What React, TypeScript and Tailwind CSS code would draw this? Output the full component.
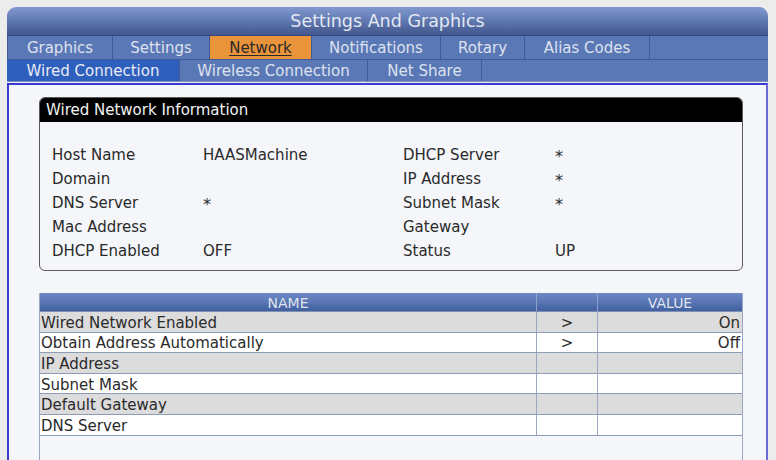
import React from "react";

const font = { fontFamily: '"DejaVu Sans", Verdana, sans-serif' };

const tabs1 = [
  { label: "Graphics", w: 105 },
  { label: "Settings", w: 97 },
  { label: "Network", w: 102, active: true },
  { label: "Notifications", w: 129 },
  { label: "Rotary", w: 84 },
  { label: "Alias Codes", w: 125 },
];

const tabs2 = [
  { label: "Wired Connection", w: 173, active: true },
  { label: "Wireless Connection", w: 188 },
  { label: "Net Share", w: 114 },
];

const info: [string, string, string, string][] = [
  ["Host Name", "HAASMachine", "DHCP Server", "*"],
  ["Domain", "", "IP Address", "*"],
  ["DNS Server", "*", "Subnet Mask", "*"],
  ["Mac Address", "", "Gateway", ""],
  ["DHCP Enabled", "OFF", "Status", "UP"],
];

const rows: [string, string, string][] = [
  ["Wired Network Enabled", ">", "On"],
  ["Obtain Address Automatically", ">", "Off"],
  ["IP Address", "", ""],
  ["Subnet Mask", "", ""],
  ["Default Gateway", "", ""],
  ["DNS Server", "", ""],
];

function Val({ v }: { v: string }) {
  if (v === "*") return <span className="inline-block translate-y-[2px] text-[16px]">*</span>;
  return <>{v}</>;
}

export default function App() {
  return (
    <div
      className="w-[776px] h-[460px] overflow-hidden bg-[#ececec] pt-[7px] pl-[7px] pr-[8px] flex flex-col"
      style={font}
    >
      {/* Title bar */}
      <div className="h-[29px] shrink-0 rounded-t-[9px] bg-gradient-to-b from-[#8199cf] via-[#5f78b0] to-[#42578d] border-b border-[#34477a] flex items-center justify-center text-[17.5px] text-[#e4e8f2] pt-[1px]">
        Settings And Graphics
      </div>
      {/* Tab row 1 */}
      <div className="h-[24px] shrink-0 bg-[#5b78b6] flex border-b border-[#3f5a94] border-l border-l-[#3f5a94]">
        {tabs1.map((t) => (
          <div
            key={t.label}
            style={{ width: t.w }}
            className={
              "h-full flex items-center justify-center text-[15px] pt-[2px] border-r border-[#3f5a94] " +
              (t.active ? "bg-[#e9943b] text-[#2a2a2a] underline underline-offset-2" : "text-[#dde2ee]")
            }
          >
            {t.label}
          </div>
        ))}
      </div>
      {/* Tab row 2 */}
      <div className="h-[22px] shrink-0 bg-[#5b78b6] flex border-b border-[#8090c0]">
        {tabs2.map((t) => (
          <div
            key={t.label}
            style={{ width: t.w }}
            className={
              "h-full flex items-center justify-center text-[15px] pt-[1px] border-r border-[#3f5a94] " +
              (t.active ? "bg-[#2f5fbd] text-[#e8ecf5]" : "text-[#dde2ee]")
            }
          >
            {t.label}
          </div>
        ))}
      </div>
      {/* Content */}
      <div className="mt-[1px] flex-1 border-2 border-b-0 border-[#3a3ad4] border-r-[#6a6ad8] bg-[#f4f6f9] flex flex-col pl-[30px] pt-[12px]">
        {/* Info box */}
        <div className="w-[704px] shrink-0 rounded-[6px] border border-[#5a5a5a] overflow-hidden bg-[#f4f6f9]">
          <div className="h-[24px] bg-black text-[#f2f2f2] text-[15px] flex items-center pl-[6px] pt-[1px]">
            Wired Network Information
          </div>
          <div className="pt-[21px] pb-[7px] pl-[12px] grid grid-cols-[151px_200px_152px_1fr] text-[15px] text-[#2a2a2a]">
            {info.map((r, i) => (
              <React.Fragment key={i}>
                <div className="h-[24px] flex items-center">{r[0]}</div>
                <div className="h-[24px] flex items-center"><Val v={r[1]} /></div>
                <div className="h-[24px] flex items-center">{r[2]}</div>
                <div className="h-[24px] flex items-center"><Val v={r[3]} /></div>
              </React.Fragment>
            ))}
          </div>
        </div>
        {/* Table */}
        <div className="mt-[22px] w-[704px] flex-1 border-x border-[#9aa6c4] flex flex-col">
          <div className="h-[19px] shrink-0 flex bg-gradient-to-b from-[#6d88c4] via-[#5a76b4] to-[#41609e] text-[14px] text-[#dfe4ef] border-b border-[#7f8fb5]">
            <div className="w-[497px] flex items-center justify-center pt-[2px] border-r border-[#8ea0cc]">NAME</div>
            <div className="w-[61px] border-r border-[#8ea0cc]"></div>
            <div className="flex-1 flex items-center justify-center pt-[2px]">VALUE</div>
          </div>
          {rows.map((r, i) => (
            <div
              key={i}
              className={
                "h-[20.6px] shrink-0 flex text-[15px] text-[#2a2a2a] border-b border-[#8e9bb8] " +
                (i % 2 === 0 ? "bg-[#dcdcdc]" : "bg-white")
              }
            >
              <div className="w-[497px] flex items-center pl-[1px] pt-[3px] border-r border-[#9aa6c4] leading-none">{r[0]}</div>
              <div className="w-[61px] flex items-center justify-center pt-[3px] border-r border-[#9aa6c4] leading-none">{r[1]}</div>
              <div className="flex-1 flex items-center justify-end pr-[2px] pt-[3px] leading-none">{r[2]}</div>
            </div>
          ))}
        </div>
      </div>
    </div>
  );
}
